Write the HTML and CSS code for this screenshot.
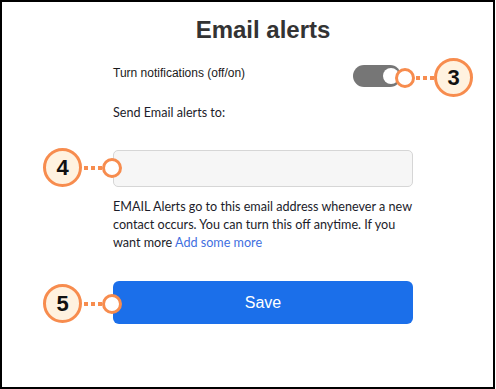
FILE: index.html
```html
<!DOCTYPE html>
<html>
<head>
<meta charset="utf-8">
<link rel="stylesheet" href="styles.css">
</head>
<body>
<div class="frame">
  <div class="content">
    <h1 class="title">Email alerts</h1>
    <div class="toggle-row">
      <span class="toggle-label">Turn notifications (off/on)</span>
      <div class="switch"><span class="knob"></span></div>
    </div>
    <div class="field-label">Send Email alerts to:</div>
    <div class="input"></div>
    <p class="help">EMAIL Alerts go to this email address whenever a new contact occurs. You can turn this off anytime. If you want more <a class="link">Add some more</a></p>
    <button class="save">Save</button>
  </div>

  <div class="callout c3">
    <span class="dot"></span><span class="dash"></span><span class="num">3</span>
  </div>
  <div class="callout c4">
    <span class="num">4</span><span class="dash"></span><span class="dot"></span>
  </div>
  <div class="callout c5">
    <span class="num">5</span><span class="dash"></span><span class="dot"></span>
  </div>
</div>
</body>
</html>
```
FILE: styles.css
```css
html, body {
  margin: 0;
  padding: 0;
  background: #fff;
}
.frame {
  position: relative;
  box-sizing: border-box;
  width: 495px;
  height: 389px;
  border: 2px solid #000;
  background: #fff;
}
.content {
  margin-left: 111px;
  width: 300px;
  display: flex;
  flex-direction: column;
}
.title {
  margin: 14px 0 0;
  font: bold 24px/28px "Liberation Sans", Arial, sans-serif;
  color: #333;
  text-align: center;
}
.toggle-row {
  margin-top: 21px;
  display: flex;
  justify-content: space-between;
  align-items: flex-start;
  padding-right: 12px;
}
.toggle-label {
  font: 12px/16px "Liberation Sans", Arial, sans-serif;
  color: #1a1a1a;
}
.switch {
  position: relative;
  width: 48px;
  height: 22px;
  border-radius: 11px;
  background: #767676;
}
.knob {
  position: absolute;
  right: 2px;
  top: 3px;
  width: 16px;
  height: 16px;
  border-radius: 50%;
  background: #fff;
}
.field-label {
  margin-top: 17px;
  font: 12.6px/18px Lato, "Noto Sans", sans-serif;
  color: #1c1c2a;
}
.input {
  margin-top: 28px;
  box-sizing: border-box;
  height: 37px;
  border: 1px solid #d6d6d6;
  border-radius: 5px;
  background: #f6f6f6;
}
.help {
  margin: 11px 0 0;
  font: 12.6px/18px Lato, "Noto Sans", sans-serif;
  color: #1c1c2a;
}
.link {
  color: #3f6fe0;
}
.save {
  margin-top: 29px;
  height: 43px;
  border: none;
  border-radius: 6px;
  background: #1b6fea;
  color: #fff;
  font: 16px "Liberation Sans", Arial, sans-serif;
  padding: 0;
}
.callout {
  position: absolute;
  display: flex;
  align-items: center;
}
.num {
  box-sizing: border-box;
  width: 39px;
  height: 39px;
  border: 3px solid #f78c4e;
  border-radius: 50%;
  background: #fff2e0;
  display: flex;
  align-items: center;
  justify-content: center;
  font: bold 22px "Liberation Sans", Arial, sans-serif;
  color: #111;
}
.dot {
  box-sizing: border-box;
  width: 20px;
  height: 20px;
  border: 3px solid #f78c4e;
  border-radius: 50%;
  background: #fff;
}
.dash {
  width: 18px;
  height: 4px;
  background: repeating-linear-gradient(to right, #f78c4e 0 4px, transparent 4px 7px);
}
.c3 { left: 393px; top: 56px; }
.c3 .dash { width: 18px; margin-left: 1px; }
.c4 { left: 41px; top: 146px; }
.c4 .dash { margin-left: 2px; }
.c5 { left: 41px; top: 282px; }
.c5 .dash { margin-left: 2px; }
```
